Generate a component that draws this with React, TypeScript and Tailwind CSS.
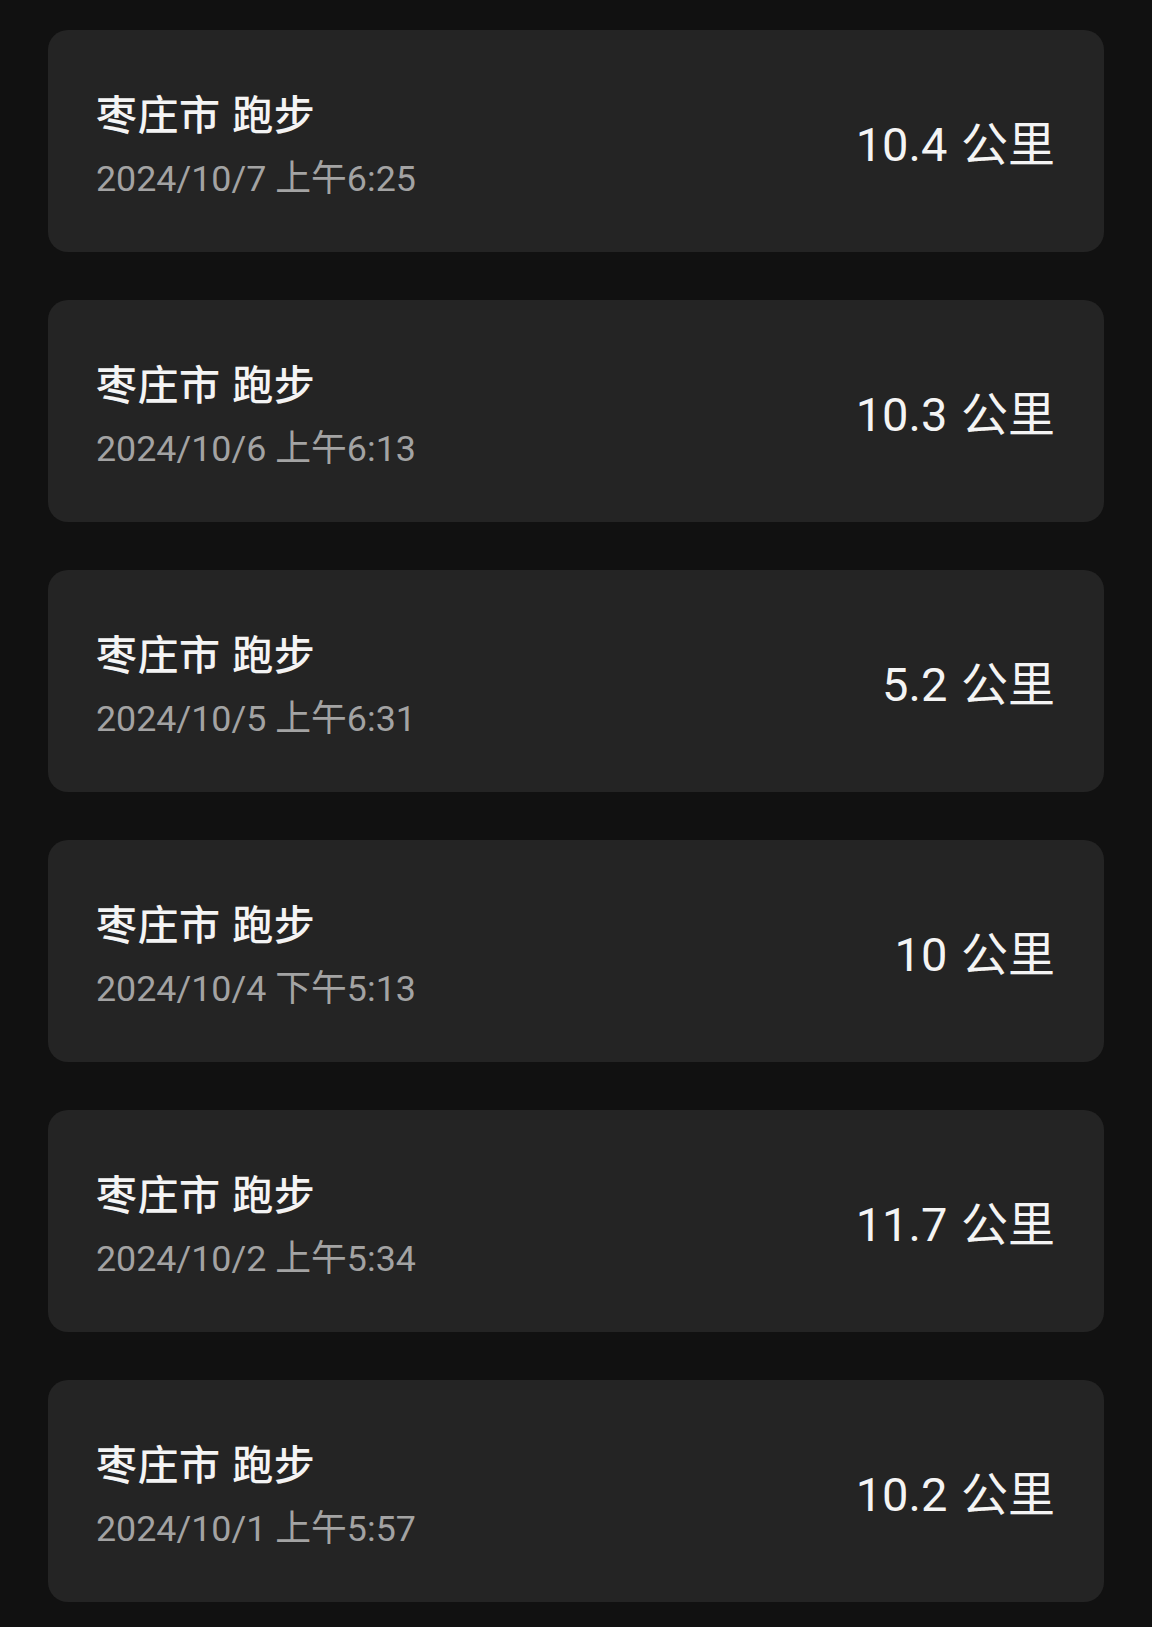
const runs = [
  { date: "2024/10/7 上午6:25", km: "10.4" },
  { date: "2024/10/6 上午6:13", km: "10.3" },
  { date: "2024/10/5 上午6:31", km: "5.2" },
  { date: "2024/10/4 下午5:13", km: "10" },
  { date: "2024/10/2 上午5:34", km: "11.7" },
  { date: "2024/10/1 上午5:57", km: "10.2" },
];

export default function App() {
  return (
    <div
      className="min-h-[1627px] bg-[#111111] px-[48px] pt-[30px] flex flex-col gap-[48px]"
      style={{ fontFamily: "Roboto, 'Noto Sans CJK SC', sans-serif" }}
    >
      {runs.map((run) => (
        <div
          key={run.date}
          className="h-[222px] shrink-0 rounded-[20px] bg-[#242424] flex items-center justify-between pl-[48px] pr-[49px] pt-[8px]"
        >
          <div className="flex flex-col">
            <div className="text-[41px] leading-[56px] font-medium tracking-[0.5px] [word-spacing:1px] text-[#f4f4f4]">
              枣庄市 跑步
            </div>
            <div className="mt-[11px] text-[35.8px] leading-[48px] text-[#a3a3a3]">{run.date}</div>
          </div>
          <div className="text-[47px] leading-[56px] [word-spacing:2px] text-[#f4f4f4]">{run.km} 公里</div>
        </div>
      ))}
    </div>
  );
}
